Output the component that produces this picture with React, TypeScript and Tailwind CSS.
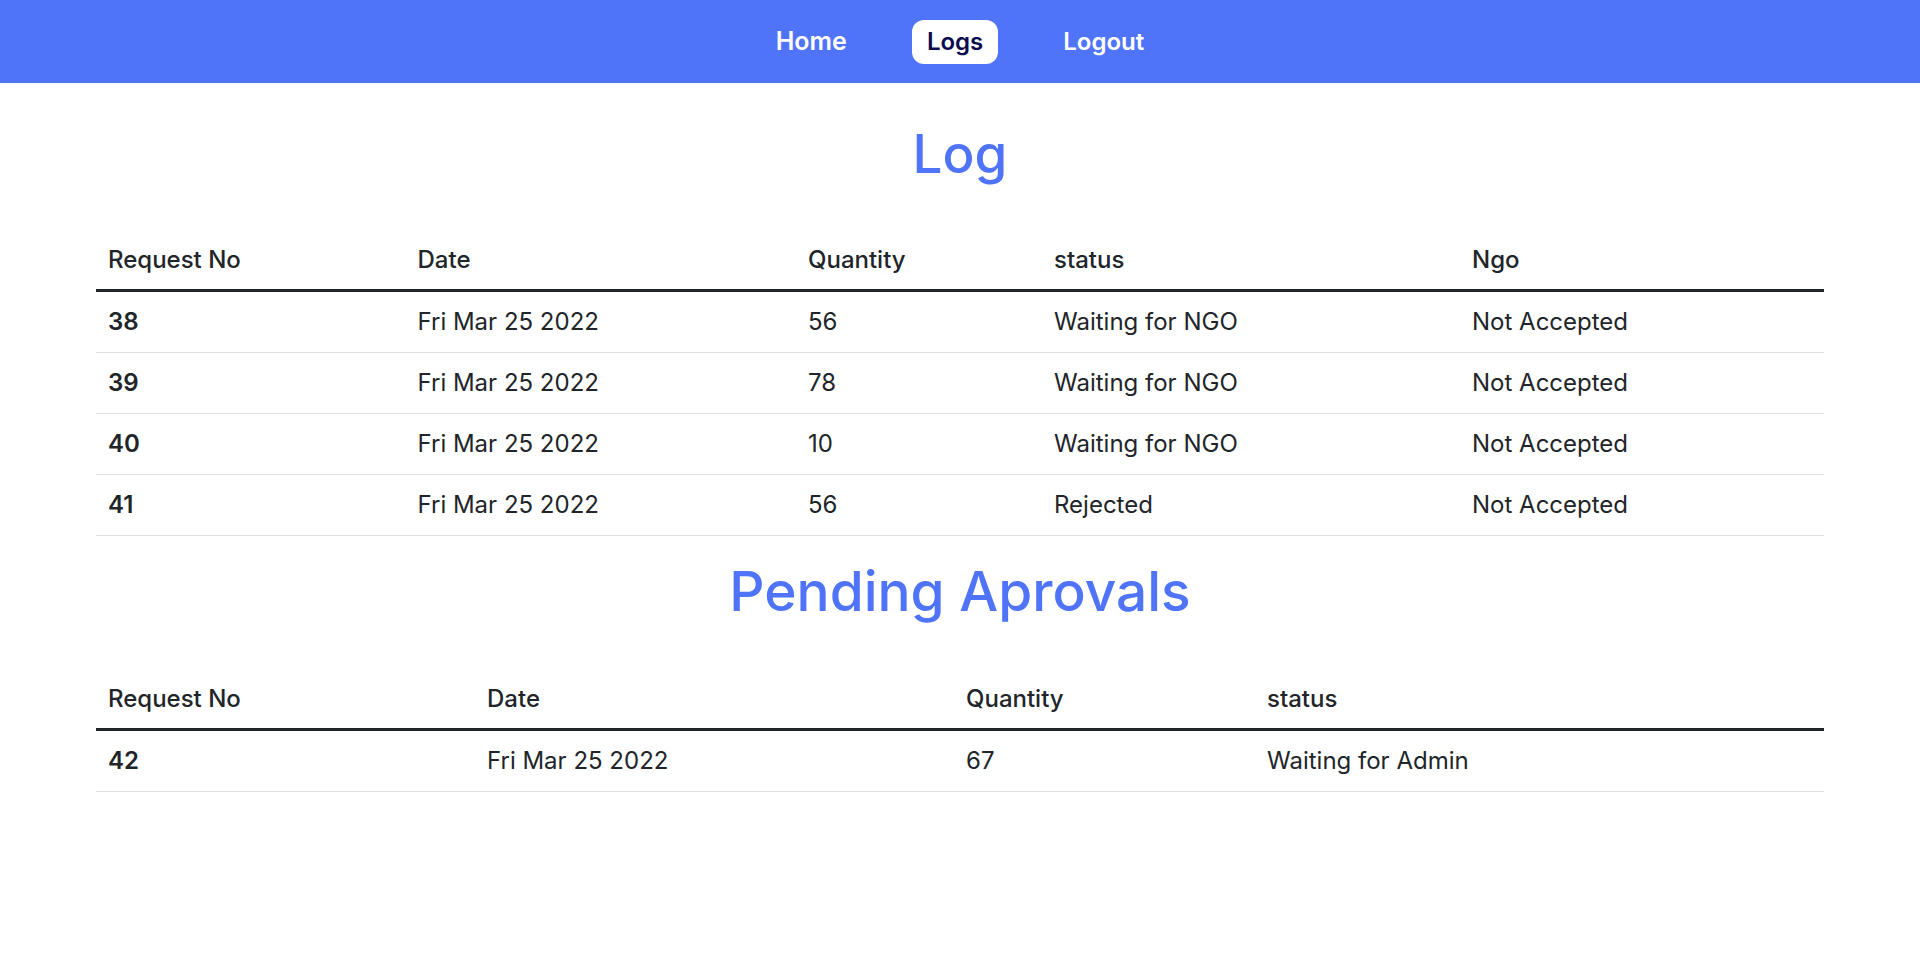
import React from "react";

const logRows = [
  { no: 38, date: "Fri Mar 25 2022", qty: 56, status: "Waiting for NGO", ngo: "Not Accepted" },
  { no: 39, date: "Fri Mar 25 2022", qty: 78, status: "Waiting for NGO", ngo: "Not Accepted" },
  { no: 40, date: "Fri Mar 25 2022", qty: 10, status: "Waiting for NGO", ngo: "Not Accepted" },
  { no: 41, date: "Fri Mar 25 2022", qty: 56, status: "Rejected", ngo: "Not Accepted" },
];

const pendingRows = [{ no: 42, date: "Fri Mar 25 2022", qty: 67, status: "Waiting for Admin" }];

function Navbar() {
  return (
    <nav className="h-[83px] bg-[#4f74f9] flex items-center justify-center gap-[50px]">
      <a className="px-[15px] h-11 flex items-center text-[25px] font-semibold text-white">Home</a>
      <a className="px-[15px] h-11 flex items-center text-[24px] font-semibold text-[#0b0b4d] bg-white rounded-xl">
        Logs
      </a>
      <a className="px-[15px] h-11 flex items-center text-[24px] font-semibold text-white">Logout</a>
    </nav>
  );
}

function DataTable({
  headers,
  widths,
  rows,
}: {
  headers: string[];
  widths: number[];
  rows: (string | number)[][];
}) {
  return (
    <table className="w-[90%] mx-auto table-fixed border-collapse text-[#212529] text-[24px]">
      <colgroup>
        {widths.map((w, i) => (
          <col key={i} style={{ width: w }} />
        ))}
      </colgroup>
      <thead>
        <tr>
          {headers.map((h) => (
            <th
              key={h}
              className="text-left font-medium px-3 py-[14px] leading-[30px] border-b-[3px] border-[#212529]"
            >
              {h}
            </th>
          ))}
        </tr>
      </thead>
      <tbody>
        {rows.map((r, i) => (
          <tr key={i}>
            {r.map((c, j) => (
              <td
                key={j}
                className={`px-3 py-[15px] leading-[30px] border-b border-[#dee2e6] ${
                  j === 0 ? "font-semibold" : "font-normal"
                }`}
              >
                {c}
              </td>
            ))}
          </tr>
        ))}
      </tbody>
    </table>
  );
}

export default function App() {
  return (
    <div className="min-h-[972px] bg-white font-['Inter',sans-serif]">
      <Navbar />
      <h1 className="mt-[41px] mb-[47px] text-center text-[53px] leading-[60px] font-medium text-[#4f74f9]">
        Log
      </h1>
      <DataTable
        headers={["Request No", "Date", "Quantity", "status", "Ngo"]}
        widths={[309.5, 390.5, 246, 418, 364]}
        rows={logRows.map((r) => [r.no, r.date, r.qty, r.status, r.ngo])}
      />
      <h2 className="mt-[25px] mb-[49px] text-center text-[55px] leading-[60px] font-medium text-[#4f74f9]">
        Pending Aprovals
      </h2>
      <DataTable
        headers={["Request No", "Date", "Quantity", "status"]}
        widths={[379, 479, 301, 569]}
        rows={pendingRows.map((r) => [r.no, r.date, r.qty, r.status])}
      />
    </div>
  );
}
